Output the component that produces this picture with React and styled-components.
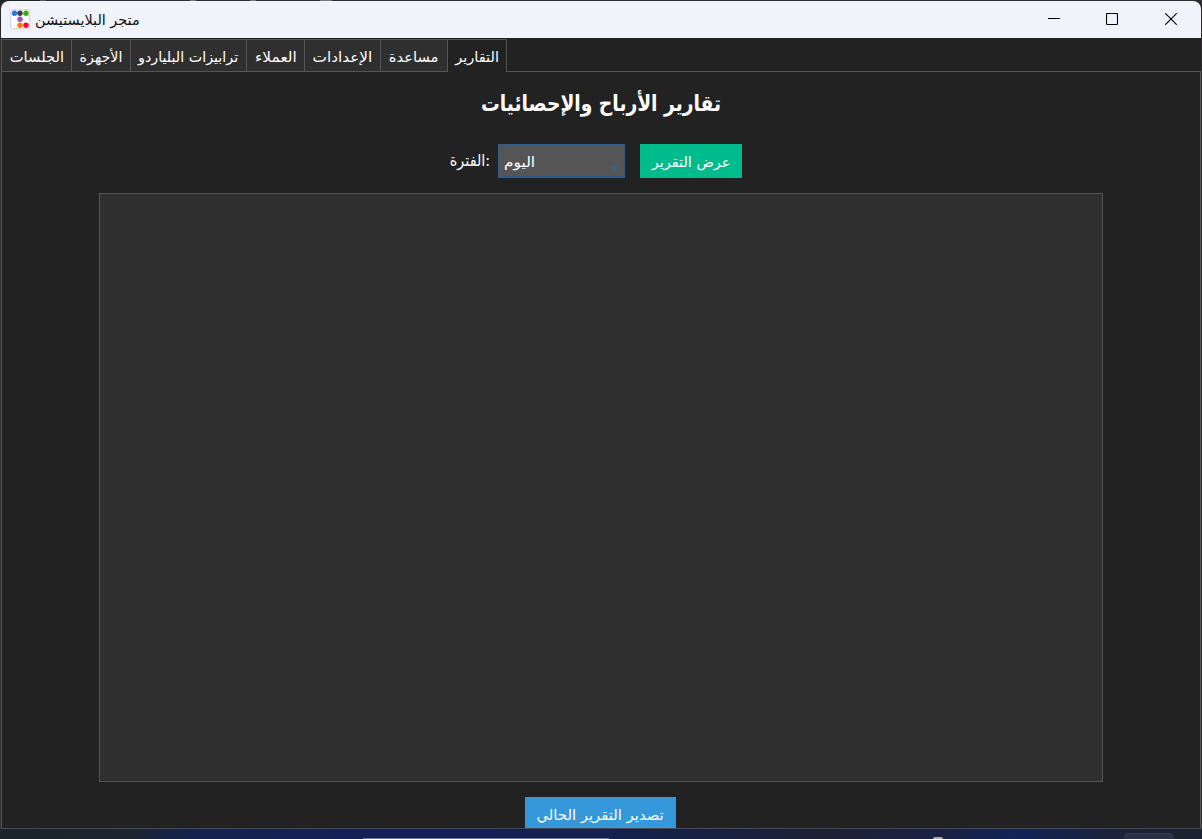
import React from "react";
import styled, { createGlobalStyle } from "styled-components";

const Global = createGlobalStyle`
  * { box-sizing: border-box; }
  body { margin: 0; overflow: hidden; background: #222; font-family: "DejaVu Sans", sans-serif; }
`;

const Desktop = styled.div`
  width: 1202px;
  height: 839px;
  display: flex;
  flex-direction: column;
  background: linear-gradient(#2b282b 0 40px, #303030 40px);
  overflow: hidden;
`;
const TopEdge = styled.div`
  height: 1px;
  flex: none;
  background: linear-gradient(90deg, #222 0 40px, #555 40px 46px, #302d31 46px 190px, #777 190px 196px, #302d31 196px 250px, #777 250px 256px, #302d31 256px 320px, #777 320px 332px, #302d31 332px);
`;
const Window = styled.div`
  height: 828px;
  flex: none;
  margin: 0 1px;
  display: flex;
  flex-direction: column;
  background: #222;
  border-radius: 8px 8px 0 0;
  border-bottom: 1px solid #454a55;
  overflow: hidden;
`;
const TitleBar = styled.header`
  height: 37px;
  flex: none;
  display: flex;
  align-items: center;
  padding: 0 1px 0 9px;
  background: #f0f3fa;
  color: #111;
`;
const WindowTitle = styled.div`
  width: 106px;
  margin-left: 4px;
`;
const Controls = styled.div`
  margin-left: auto;
  display: flex;
  height: 100%;
`;
const Control = styled.div`
  width: 58.5px;
  display: flex;
  align-items: center;
  justify-content: center;
  padding-bottom: 1px;
`;
const Text = styled.span`
  display: block;
  width: max-content;
  white-space: nowrap;
  direction: ${(p) => p.$dir || "rtl"};
  font-family: ${(p) => (p.$condensed ? '"DejaVu Sans Condensed", ' : "")}"DejaVu Sans", sans-serif;
  font-size: ${(p) => p.$size || 14}px;
  font-weight: ${(p) => (p.$bold ? 700 : 400)};
  line-height: 20px;
  transform: scaleX(${(p) => p.$sx || 1});
  transform-origin: ${(p) => p.$origin || "center"};
`;
const Tabs = styled.nav`
  height: 34px;
  flex: none;
  display: flex;
  padding-top: 1px;
`;
const Tab = styled.div`
  width: ${(p) => p.$w}px;
  display: flex;
  align-items: center;
  justify-content: center;
  padding-top: ${(p) => (p.$active ? 2 : 3)}px;
  color: #fff;
  background: ${(p) => (p.$active ? "#222" : "#2f2f2f")};
  border: solid #555;
  border-width: 1px 1px ${(p) => (p.$active ? 0 : 1)}px ${(p) => (p.$first ? 1 : 0)}px;
`;
const TabRest = styled.div`
  flex: 1;
  border-bottom: 1px solid #555;
`;
const Panel = styled.main`
  flex: 1;
  min-height: 0;
  display: flex;
  flex-direction: column;
  align-items: center;
  border: solid #555;
  border-width: 0 1px;
  padding-top: 22px;
`;
const Heading = styled.h1`
  margin: 0;
  height: 50px;
  flex: none;
  color: #fff;
`;
const Filters = styled.div`
  height: 34px;
  width: 302px;
  flex: none;
  display: flex;
  justify-content: flex-end;
  margin-left: -20px;
  color: #fff;
`;
const PeriodLabel = styled.div`
  width: 49px;
  padding: 7px 7px 0 0;
  display: flex;
  justify-content: center;
`;
const Select = styled.div`
  width: 127px;
  margin-right: 15px;
  display: flex;
  align-items: center;
  justify-content: space-between;
  padding: 1px 4px 0;
  background: #555;
  border: 2px solid #375a7f;
`;
const Button = styled.button`
  width: ${(p) => p.$w}px;
  height: 34px;
  flex: none;
  display: flex;
  align-items: center;
  justify-content: center;
  padding: 2px 0 0;
  border: 0;
  color: #fff;
  background: ${(p) => p.$bg};
`;
const Report = styled.section`
  width: 1004px;
  height: 589px;
  flex: none;
  margin: 15px 0;
  background: #2f2f2f;
  border: 1px solid #555;
`;
const ExportRow = styled.div`
  display: flex;
  flex: none;
  padding-right: 1px;
`;
const Taskbar = styled.footer`
  flex: 1;
  display: flex;
  align-items: flex-end;
  background: linear-gradient(90deg, #1b242b 0, #1c2530 130px, #14234e 190px, #14205a 420px, #14204c 620px, #1d2136 820px, #1b2140 920px, #122457 1020px, #1c2237 1130px, #1b2230 1202px);
`;
const SearchEdge = styled.div`
  width: 246px;
  height: 1px;
  margin-left: 363px;
  background: #69718f;
`;
const TrayDot = styled.div`
  width: 10px;
  height: 2px;
  margin-left: 324px;
  border-radius: 5px 5px 0 0;
  background: #aaa6a2;
`;
const TrayItem = styled.div`
  width: 50px;
  height: 6px;
  margin-left: 181px;
  border-radius: 5px 5px 0 0;
  background: #2b3148;
  border-top: 1px solid #363c50;
`;

const tabs = [
  ["الجلسات", 71, 1.05],
  ["الأجهزة", 59, 1.02],
  ["ترابيزات البلياردو", 116, 1.02],
  ["العملاء", 58, 1.1],
  ["الإعدادات", 76, 1.09],
  ["مساعدة", 67, 1.05],
  ["التقارير", 59, 1.04],
];

const AppLogo = () => (
  <svg width="21" height="21" viewBox="0 0 21 21">
    <rect x=".75" y=".75" width="19" height="19" rx="2" fill="#fff" stroke="#cfcfcf" />
    <circle cx="4.5" cy="4.3" r="2.7" fill="#267be0" />
    <circle cx="10" cy="4.3" r="2.7" fill="#3c4043" />
    <circle cx="16" cy="4.3" r="2.7" fill="#3dae12" />
    <circle cx="10" cy="10.3" r="2.7" fill="#9b55bd" />
    <circle cx="10" cy="16.3" r="2.7" fill="#fb7714" />
    <circle cx="16" cy="16.3" r="2.7" fill="#f80537" />
  </svg>
);

export default function App() {
  return (
    <Desktop>
      <Global />
      <TopEdge />
      <Window>
        <TitleBar>
          <AppLogo />
          <WindowTitle><Text $origin="left" $sx={1.03}>متجر البلايستيشن</Text></WindowTitle>
          <Controls>
            <Control><svg width="12" height="12"><path d="M0 5.5H12" stroke="#000" /></svg></Control>
            <Control><svg width="12" height="12"><rect x=".5" y=".5" width="11" height="11" rx="1" fill="none" stroke="#000" strokeWidth="1.1" /></svg></Control>
            <Control><svg width="12" height="12"><path d="M.3.3 11.7 11.7M11.7.3.3 11.7" stroke="#000" strokeWidth="1.1" /></svg></Control>
          </Controls>
        </TitleBar>
        <Tabs>
          {tabs.map(([label, w, sx], i) => (
            <Tab key={label} $w={w} $first={i === 0} $active={i === 6}><Text $sx={sx}>{label}</Text></Tab>
          ))}
          <TabRest />
        </Tabs>
        <Panel>
          <Heading><Text $size={22} $bold $condensed $sx={0.945}>تقارير الأرباح والإحصائيات</Text></Heading>
          <Filters>
            <PeriodLabel><Text $size={16} $dir="ltr" $condensed>الفترة:</Text></PeriodLabel>
            <Select>
              <Text $origin="left" $sx={1.1}>اليوم</Text>
              <svg width="9" height="18"><path d="M0 12.5H2.5L4.5 13.5 6.5 12.5H9L4.5 17.5Z" fill="#375f96" /></svg>
            </Select>
            <Button $w={102} $bg="#00bc8c"><Text $sx={1.03}>عرض التقرير</Text></Button>
          </Filters>
          <Report />
          <ExportRow>
            <Button $w={151} $bg="#3498db"><Text $sx={1.06}>تصدير التقرير الحالي</Text></Button>
          </ExportRow>
        </Panel>
      </Window>
      <Taskbar><SearchEdge /><TrayDot /><TrayItem /></Taskbar>
    </Desktop>
  );
}
